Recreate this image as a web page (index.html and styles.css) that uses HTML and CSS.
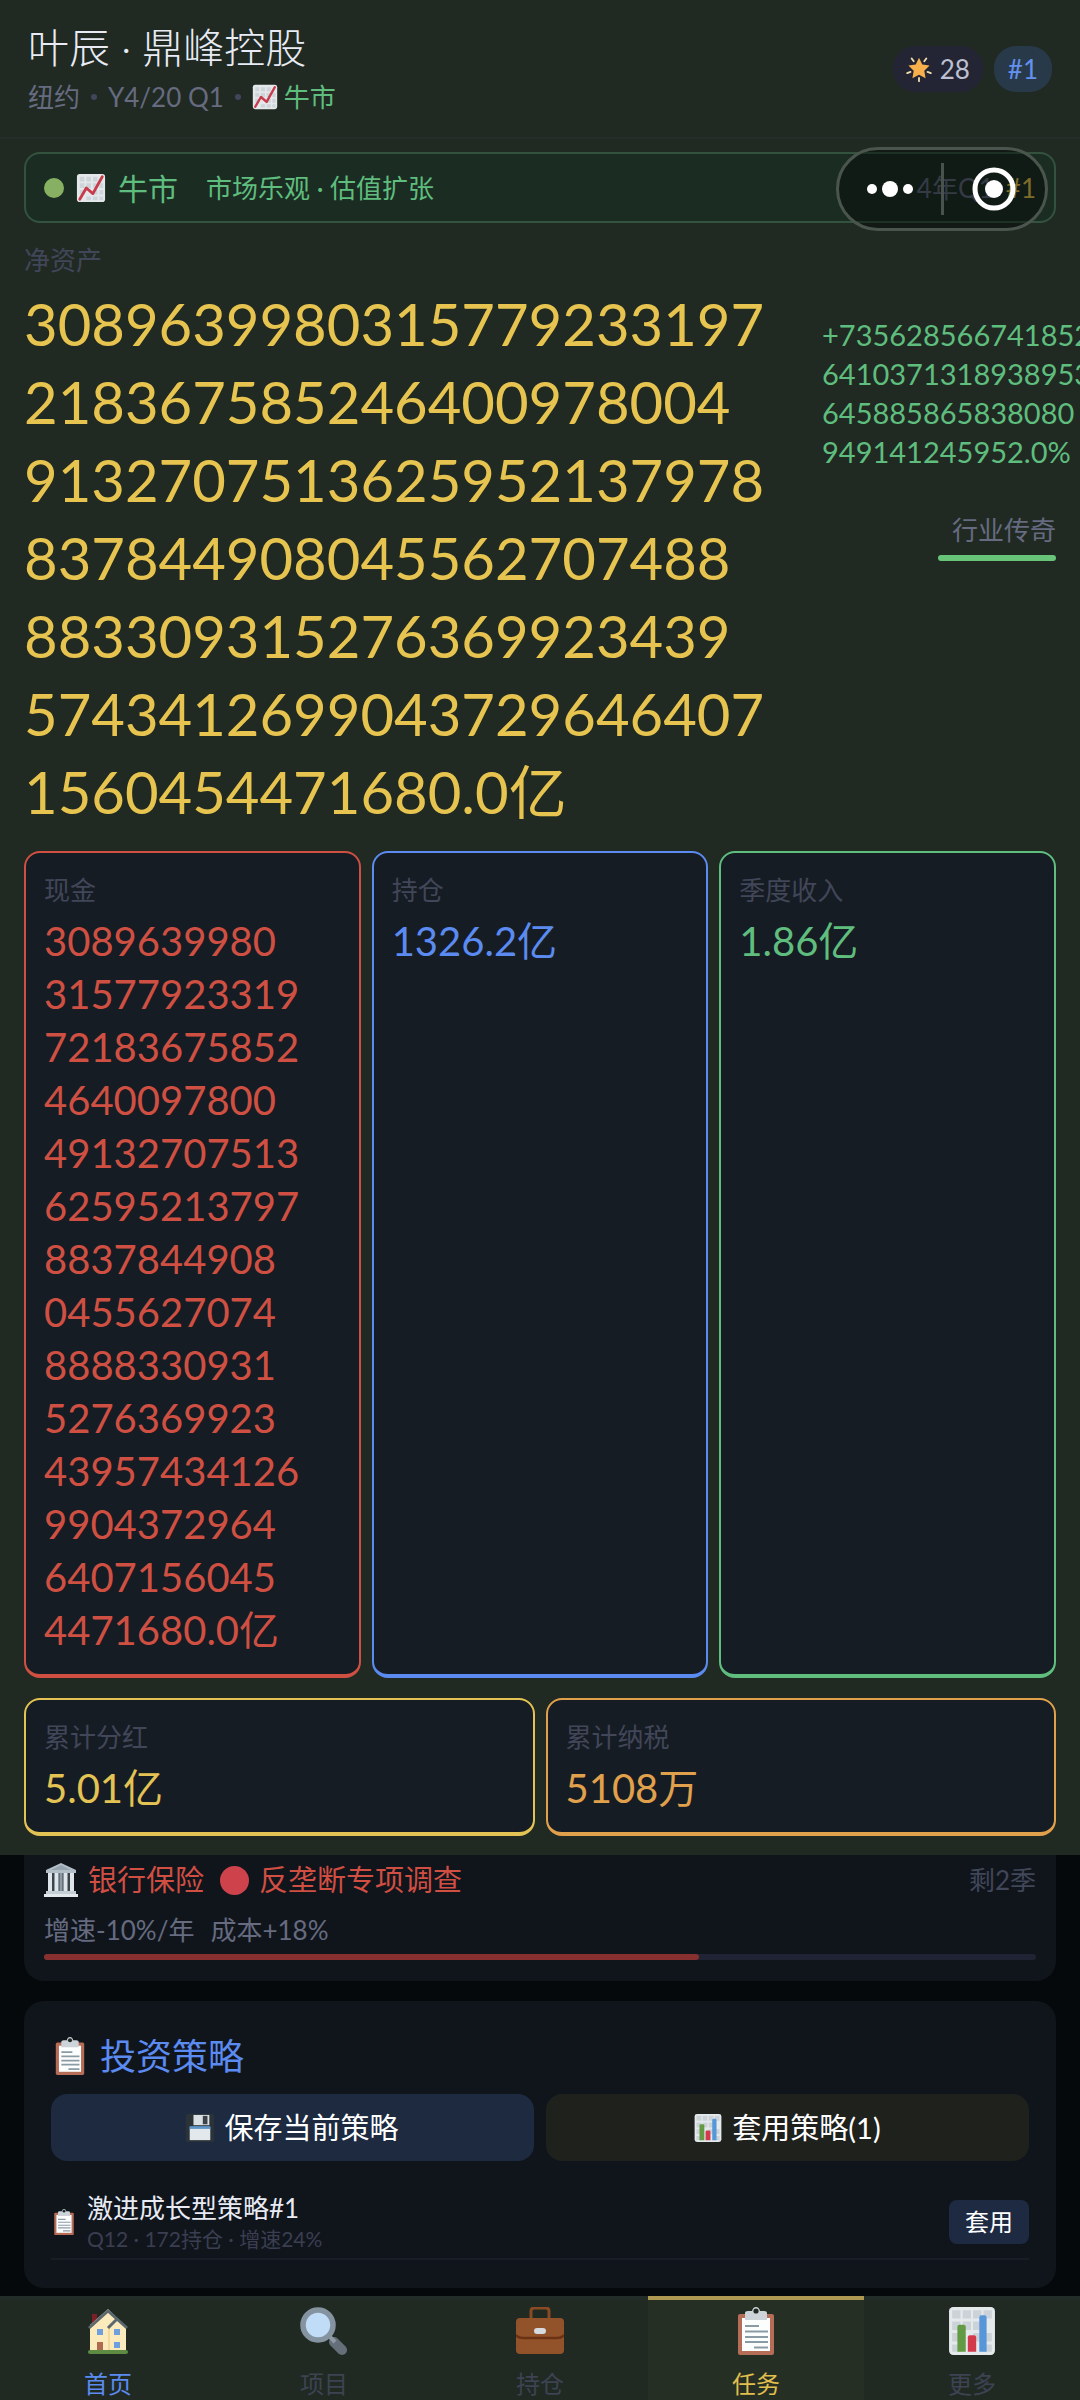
FILE: index.html
```html
<!DOCTYPE html>
<html lang="zh-CN">
<head>
<meta charset="utf-8">
<meta name="viewport" content="width=device-width, initial-scale=1">
<title>鼎峰控股</title>
<link rel="stylesheet" href="styles.css">
</head>
<body>
<svg class="sprite" aria-hidden="true">
  <symbol id="i-trend" viewBox="0 0 32 32">
    <rect x="1" y="1" width="30" height="30" rx="3" fill="#e4e8ea"/>
    <path d="M4 4h5v5H4zM11 4h5v5h-5zM18 4h5v5h-5zM4 11h5v5H4zM11 11h5v5h-5zM18 11h5v5h-5zM25 11h4v5h-4zM4 18h5v5H4zM18 18h5v5h-5zM25 18h4v5h-4zM11 25h5v4h-5zM18 25h5v4h-5zM25 25h4v4h-4z" fill="#cdd4da"/>
    <path d="M4 28l7-12 7 6L28 4" fill="none" stroke="#c73c4c" stroke-width="3" stroke-linecap="round" stroke-linejoin="round"/>
  </symbol>
  <symbol id="i-star" viewBox="0 0 32 32">
    <path d="M16 2l4 8.500 9 1.200-6.500 6.500 1.600 9.300L16 23l-8.100 4.500 1.600-9.300L3 11.700l9-1.200z" fill="#f7b04b"/>
    <path d="M7 3l2.500 3.500M25 3l-2.500 3.500M1.500 21l4-1.500M30.500 21l-4-1.500M16 27v4" stroke="#f3dfae" stroke-width="2.200" stroke-linecap="round"/>
  </symbol>
  <symbol id="i-bank" viewBox="0 0 34 34">
    <path d="M17 0l15 7v3H2V7z" fill="#b3bfc8"/><path d="M17 2l10 5H7z" fill="#97a5b0"/>
    <rect x="4" y="10" width="26" height="18" fill="#3a464f"/>
    <path d="M4 10h4v18H4zM10.500 10h4v18h-4zM19.500 10h4v18h-4zM26 10h4v18h-4z" fill="#dfe5e9"/>
    <path d="M15.500 10h3v18h-3z" fill="#8e9ba6"/>
    <path d="M2 28h30v3H2z" fill="#c5cfd6"/><path d="M0 31h34v3H0z" fill="#e3e8ec"/>
  </symbol>
  <symbol id="i-clip" viewBox="0 0 38 48">
    <rect x="1" y="7" width="36" height="41" rx="2" fill="#b56d58"/>
    <path d="M5 11h28v33H5z" fill="#fcfdfd"/>
    <path d="M8 13V6q0-2 3-2h4q1-4 4-4t4 4h4q3 0 3 2v7z" fill="#ccd4da"/>
    <circle cx="19" cy="4" r="2.600" fill="#202a22"/>
    <path d="M8 19h14M8 24.500h23M8 30h23M8 35h23M17 40.500h14" stroke="#8b9ba6" stroke-width="2.200"/>
  </symbol>
  <symbol id="i-floppy" viewBox="0 0 30 30">
    <rect x="0" y="0" width="30" height="30" rx="2" fill="#2b3339"/>
    <path d="M8 1h17v11H8z" fill="#d9dfe3"/><path d="M18 2h5v9h-5z" fill="#3a434a"/>
    <path d="M4 14h22v14H4z" fill="#e2e8ec"/><path d="M4 13h22v3H4z" fill="#5f96c9"/>
  </symbol>
  <symbol id="i-bars" viewBox="0 0 44 46">
    <rect width="44" height="46" rx="4" fill="#e4e9ec"/>
    <path d="M3 3h8v8H3zM13 3h8v8h-8zM23 3h8v8h-8zM33 3h8v8h-8zM3 14h8v8H3zM13 14h8v8h-8zM23 14h8v8h-8zM3 25h8v8H3zM23 25h8v8h-8zM33 25h8v8h-8zM3 36h8v7H3zM33 36h8v7h-8z" fill="#ccd3d8"/>
    <path d="M8 43V19q0-2 2-2h4q2 0 2 2v24z" fill="#639a44"/>
    <path d="M18 43V29q0-2 2-2h4q2 0 2 2v14z" fill="#d23b4c"/>
    <path d="M29 43V10q0-2 2-2h3q2 0 2 2v33z" fill="#5796d8"/>
  </symbol>
  <symbol id="i-house" viewBox="0 0 46 48">
    <path d="M7 7h5v11H7z" fill="#7c2027"/>
    <path d="M5 18L23 2l18 18v24H5z" fill="#fbeabc"/>
    <path d="M24 20v24" stroke="#f3d18c" stroke-width="1.500"/>
    <path d="M4 21L23 4l19 17M23 21l8-8" fill="none" stroke="#5b686e" stroke-width="3"/>
    <path d="M12 22h6v6h-6zM29 22h6v6h-6zM29 35h6v6h-6z" fill="#6f9fdd"/>
    <path d="M12 35h6v9h-6z" fill="#b06a50"/>
    <rect x="3" y="43" width="40" height="4" rx="2" fill="#5d8b41"/>
  </symbol>
  <symbol id="i-search" viewBox="0 0 48 48">
    <path d="M34 35l8 8" stroke="#656f79" stroke-width="10" stroke-linecap="round"/>
    <path d="M29 29l6 6" stroke="#8d99a5" stroke-width="4"/>
    <circle cx="18" cy="18" r="15" fill="#c1dcf6" stroke="#8593a0" stroke-width="5.500"/>
  </symbol>
  <symbol id="i-case" viewBox="0 0 48 48">
    <path d="M15 11V4q0-3 3-3h12q3 0 3 3v7" fill="none" stroke="#8a4a23" stroke-width="3"/>
    <rect x="0" y="11" width="48" height="36" rx="4" fill="#93532a"/>
    <path d="M0 28q2 3 7 3h34q5 0 7-3" fill="none" stroke="#6c3216" stroke-width="2.500"/>
    <rect x="18" y="21" width="12" height="6" rx="3" fill="#d5dade"/>
  </symbol>
</svg>

<div class="app">
  <div class="top">
    <header class="head">
      <div>
        <h1 class="title">叶辰 · 鼎峰控股</h1>
        <p class="meta"><span>纽约</span><i class="sep"></i><span>Y4/20 Q1</span><i class="sep"></i><svg class="ico ico-26"><use href="#i-trend"/></svg><span class="green">牛市</span></p>
      </div>
      <div class="pills">
        <span class="pill pill-star"><svg class="ico ico-26"><use href="#i-star"/></svg>28</span>
        <span class="pill pill-rank">#1</span>
      </div>
    </header>

    <div class="body">
      <section class="market">
        <i class="dot dot-market"></i>
        <svg class="ico ico-30"><use href="#i-trend"/></svg>
        <strong class="market-name">牛市</strong>
        <span class="market-desc">市场乐观 · 估值扩张</span>
        <span class="market-date">4年Q1</span>
        <span class="market-rank">#1</span>
      </section>

      <section class="net">
        <div>
          <h2 class="label">净资产</h2>
          <p class="net-value">3089639980315779233197<br>218367585246400978004<br>9132707513625952137978<br>837844908045562707488<br>883309315276369923439<br>5743412699043729646407<br>1560454471680.0亿</p>
        </div>
        <div class="growth">
          <p class="growth-value">+735628566741852<br>6410371318938953<br>645885865838080<br>949141245952.0%</p>
          <p class="rank">行业传奇</p>
          <div class="rank-bar"></div>
        </div>
      </section>

      <section class="cards cards-3">
        <div class="card red"><h3 class="label">现金</h3><p class="value">3089639980<br>31577923319<br>72183675852<br>4640097800<br>49132707513<br>62595213797<br>8837844908<br>0455627074<br>8888330931<br>5276369923<br>43957434126<br>9904372964<br>6407156045<br>4471680.0亿</p></div>
        <div class="card blue"><h3 class="label">持仓</h3><p class="value">1326.2亿</p></div>
        <div class="card green"><h3 class="label">季度收入</h3><p class="value">1.86亿</p></div>
      </section>
      <section class="cards cards-2">
        <div class="card gold"><h3 class="label">累计分红</h3><p class="value">5.01亿</p></div>
        <div class="card orange"><h3 class="label">累计纳税</h3><p class="value">5108万</p></div>
      </section>
    </div>

    <div class="capsule">
      <button class="cap-btn" type="button" aria-label="更多操作"><svg class="cap-dots" viewBox="0 0 46 18"><circle cx="5" cy="9" r="5"/><circle cx="23" cy="9" r="8"/><circle cx="41" cy="9" r="5"/></svg></button>
      <i class="cap-line"></i>
      <button class="cap-btn" type="button" aria-label="关闭"><svg class="cap-target" viewBox="0 0 44 44"><circle cx="22" cy="22" r="19" fill="none" stroke="#fff" stroke-width="5"/><circle cx="22" cy="22" r="9"/></svg></button>
    </div>
  </div>

  <main class="feed">
    <section class="panel event">
      <div class="event-row">
        <svg class="ico ico-34"><use href="#i-bank"/></svg>
        <span class="event-name">银行保险</span>
        <i class="dot dot-alert"></i>
        <span>反垄断专项调查</span>
        <span class="event-left">剩2季</span>
      </div>
      <p class="event-meta"><span>增速-10%/年</span><span>成本+18%</span></p>
      <div class="track"><div class="fill" style="width:66%"></div></div>
    </section>

    <section class="panel strategy">
      <h2 class="panel-title"><svg class="clip-38"><use href="#i-clip"/></svg>投资策略</h2>
      <div class="actions">
        <button class="btn btn-save" type="button"><svg class="ico ico-28"><use href="#i-floppy"/></svg>保存当前策略</button>
        <button class="btn btn-apply" type="button"><svg class="ico ico-28"><use href="#i-bars"/></svg>套用策略(1)</button>
      </div>
      <div class="item">
        <svg class="clip-26"><use href="#i-clip"/></svg>
        <div class="item-text">
          <p class="item-name">激进成长型策略#1</p>
          <p class="item-meta">Q12 · 172持仓 · 增速24%</p>
        </div>
        <button class="btn-small" type="button">套用</button>
      </div>
    </section>
  </main>

  <nav class="nav">
    <a class="tab tab-home" href="#home"><svg class="ico ico-46"><use href="#i-house"/></svg>首页</a>
    <a class="tab" href="#projects"><svg class="ico ico-46"><use href="#i-search"/></svg>项目</a>
    <a class="tab" href="#holdings"><svg class="ico ico-46"><use href="#i-case"/></svg>持仓</a>
    <a class="tab tab-active" href="#tasks"><svg class="ico ico-46"><use href="#i-clip"/></svg>任务</a>
    <a class="tab" href="#more"><svg class="ico ico-46"><use href="#i-bars"/></svg>更多</a>
  </nav>
</div>
</body>
</html>
```
FILE: styles.css
```css
* { box-sizing: border-box; }
body {
  margin: 0;
  background: #05090c;
  color: #e8ebf4;
  font-family: Lato, "Noto Sans CJK SC", sans-serif;
  font-size: 26px;
  line-height: 38px;
}
h1, h2, h3, p { margin: 0; font-weight: inherit; font-size: inherit; }
strong { font-weight: inherit; }
button { font: inherit; color: inherit; border: 0; padding: 0; background: none; }
a { color: inherit; text-decoration: none; }
svg { display: block; flex: none; }
.sprite { position: absolute; width: 0; height: 0; }

.ico-26 { width: 26px; height: 26px; }
.ico-28 { width: 28px; height: 28px; }
.ico-30 { width: 30px; height: 30px; }
.ico-34 { width: 34px; height: 34px; }
.ico-46 { width: 48px; height: 48px; }
.clip-38 { width: 30px; height: 38px; }
.clip-26 { width: 22px; height: 26px; }

.red { color: #cf5042; }
.blue { color: #5b8bf0; }
.green { color: #5fbd7e; }
.gold { color: #e3c353; }
.orange { color: #e0a04c; }

.app { display: flex; flex-direction: column; height: 100vh; overflow: hidden; }

/* pinned summary */
.top { position: relative; flex: none; padding-bottom: 19px; background: #202a23; }
.head {
  display: flex;
  align-items: center;
  justify-content: space-between;
  padding: 22px 28px 21px;
  border-bottom: 2px solid #242d2c;
}
.title { font-size: 41px; font-weight: 300; line-height: 52px; margin-bottom: 4px; }
.meta { display: flex; align-items: center; gap: 6px; color: #666b80; }
.sep { width: 6px; height: 6px; margin: 0 5px; border-radius: 50%; background: #41465a; }
.pills { display: flex; gap: 11px; }
.pill { display: flex; align-items: center; gap: 8px; height: 46px; border-radius: 22px; }
.pill-star { padding: 0 13px; background: #242534; color: #bcc0d2; }
.pill-rank { padding: 0 14px; background: #283a49; color: #6490ee; }

.body { padding: 13px 24px 0; }
.market {
  display: flex;
  align-items: center;
  height: 71px;
  padding: 0 18px;
  border: 2px solid #33533f;
  border-radius: 16px;
  background: #1b2d23;
  color: #5fbd7e;
}
.dot { flex: none; border-radius: 50%; }
.dot-market { width: 20px; height: 20px; margin-right: 12px; background: #87b062; }
.market-name { margin: 0 28px 0 12px; font-size: 30px; }
.market-date { margin-left: auto; color: #596273; }
.market-rank { margin-left: 12px; color: #d3b446; }

.label { color: #414659; }
.net { display: grid; grid-template-columns: 1fr 234px; padding-top: 18px; }
.net-value { margin-top: 6px; color: #e6c44f; font-size: 58px; line-height: 78px; }
.growth { display: flex; flex-direction: column; align-items: flex-end; padding-top: 74px; }
.growth-value { width: 100%; color: #5fbd7e; font-size: 29px; line-height: 39px; white-space: nowrap; }
.rank { margin-top: 40px; color: #666b80; }
.rank-bar { width: 118px; height: 6px; margin-top: 6px; border-radius: 3px; background: #67c479; }

.cards { display: grid; gap: 11px; }
.cards-3 { grid-template-columns: repeat(3, 1fr); margin-top: 20px; }
.cards-2 { grid-template-columns: repeat(2, 1fr); margin-top: 20px; }
.card {
  padding: 18px 18px 17px;
  border: 2px solid;
  border-bottom-width: 4px;
  border-radius: 16px;
  background: #161c23;
}
.value { margin-top: 6px; font-size: 40px; line-height: 53px; }

.capsule {
  position: absolute;
  top: 147px;
  right: 32px;
  display: flex;
  align-items: center;
  width: 212px;
  height: 84px;
  border: 3px solid #4a554e;
  border-radius: 42px;
  background: rgba(0, 0, 0, .4);
}
.cap-btn { display: flex; flex: 1; justify-content: center; }
.cap-line { width: 3px; height: 52px; background: #4a524d; }
.cap-dots { width: 46px; height: 18px; fill: #fff; }
.cap-target { width: 44px; height: 44px; fill: #fff; }

/* scrolling feed */
.feed { flex: 1; min-height: 0; overflow: hidden; padding: 0 24px; }
.panel { background: #10151c; border-radius: 20px; }
.event { padding: 6px 20px 21px; border-radius: 0 0 20px 20px; }
.event-row { display: flex; align-items: center; gap: 10px; color: #d14e42; font-size: 29px; }
.event-name { margin-right: 6px; }
.dot-alert { width: 29px; height: 29px; background: #ce424c; }
.event-left { margin-left: auto; color: #414659; font-size: 26px; }
.event-meta { display: flex; gap: 16px; margin-top: 12px; color: #666b80; }
.track { height: 6px; margin-top: 5px; border-radius: 3px; background: #1f2333; }
.fill { height: 6px; border-radius: 3px; background: #87302f; }

.strategy { margin-top: 20px; padding: 31px 27px 28px; }
.panel-title { display: flex; align-items: center; gap: 15px; padding-left: 4px; color: #5b8bf0; font-size: 36px; line-height: 48px; }
.actions { display: grid; grid-template-columns: 1fr 1fr; gap: 12px; margin-top: 14px; }
.btn {
  display: flex;
  align-items: center;
  justify-content: center;
  gap: 10px;
  height: 67px;
  border-radius: 16px;
  font-size: 29px;
  color: #fff;
}
.btn-save { background: #1d2a40; }
.btn-apply { background: #1f211d; }
.item {
  display: flex;
  align-items: center;
  gap: 12px;
  padding: 30px 0 5px 2px;
  border-bottom: 2px solid #191e26;
}
.item-text { flex: 1; }
.item-name { line-height: 34px; }
.item-meta { color: #3a3e50; font-size: 21px; line-height: 28px; }
.btn-small { width: 80px; height: 44px; border-radius: 8px; background: #1d2a42; color: #fff; font-size: 24px; }

.nav { display: grid; grid-template-columns: repeat(5, 1fr); flex: none; height: 104px; background: #202a23; }
.tab {
  display: flex;
  flex-direction: column;
  align-items: center;
  gap: 14px;
  padding-top: 7px;
  border-top: 4px solid #222c28;
  color: #3d4352;
  font-size: 24px;
  line-height: 30px;
}
.tab-home { color: #5b8bf0; }
.tab-active { border-color: #ae9750; background: #262f24; color: #e0bf4d; }
```
